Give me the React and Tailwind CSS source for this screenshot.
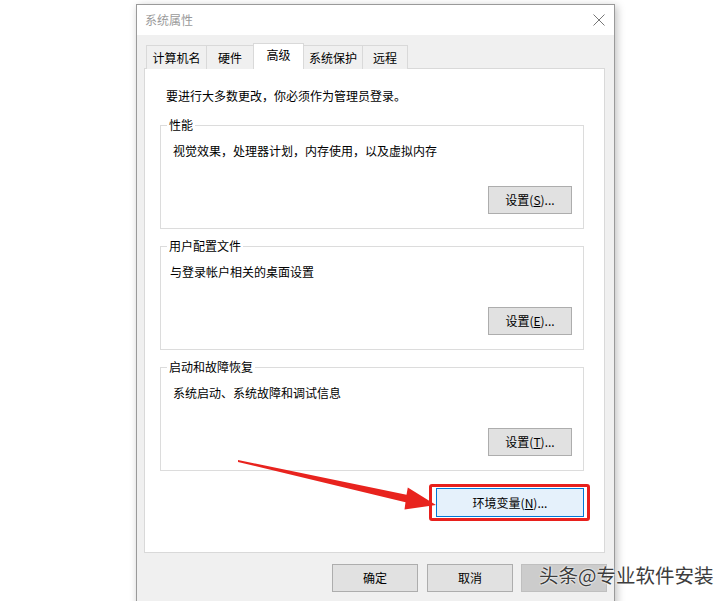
import React from "react";

const tabs = [
  { label: "计算机名", w: "w-[61px]" },
  { label: "硬件", w: "w-[48px]" },
  { label: "高级", w: "w-[51px]", active: true },
  { label: "系统保护", w: "w-[60px]" },
  { label: "远程", w: "w-[46px]" },
];

const groups = [
  { title: "性能", text: "视觉效果，处理器计划，内存使用，以及虚拟内存", key: "S", pl: "pl-[12px]" },
  { title: "用户配置文件", text: "与登录帐户相关的桌面设置", key: "E", pl: "pl-[9px]" },
  { title: "启动和故障恢复", text: "系统启动、系统故障和调试信息", key: "T", pl: "pl-[12px]" },
];

const WinButton = ({ children, className = "" }) => (
  <button className={`h-[28px] bg-[#e1e1e1] border border-[#adadad] text-black text-[12px] leading-none flex items-center justify-center ${className}`}>
    {children}
  </button>
);

const Group = ({ title, text, hotkey, pl }) => (
  <div className="relative w-[424px] h-[104px] border border-[#dcdcdc] ml-[15px]">
    <span className="absolute left-[6px] -top-[9px] bg-white px-[2px] leading-[16px]">{title}</span>
    <div className={`pt-[17px] ${pl} leading-[16px]`}>{text}</div>
    <div className="flex justify-end mt-[27px] pr-[11px]">
      <WinButton className="w-[84px] h-[27px]">
        设置(<u>{hotkey}</u>)...
      </WinButton>
    </div>
  </div>
);

export default function App() {
  return (
    <div className="relative h-[601px] overflow-hidden bg-white text-[12px] text-black font-['Noto_Sans_CJK_SC','Noto_Sans',sans-serif]">
      <div className="ml-[136px] pt-[4px]">
        <div className="w-[479px] h-[610px] border border-[#9a9a9a] bg-[#f0f0f0] shadow-[2px_2px_8px_rgba(0,0,0,0.25)] flex flex-col">
          {/* title bar */}
          <div className="h-[30px] bg-white flex items-center justify-between pl-[8px] pr-[8px]">
            <span className="text-[#9a9a9a] text-[12px]">系统属性</span>
            <svg width="12" height="12" viewBox="0 0 12 12" className="mr-[1px]">
              <path d="M0.5 0.5 L11.5 11.5 M11.5 0.5 L0.5 11.5" stroke="#777" strokeWidth="1" fill="none" />
            </svg>
          </div>

          {/* body */}
          <div className="pl-[7px] pt-[8px]">
            <div className="relative z-10 flex items-end h-[26px] pl-[2px]">
              {tabs.map((t, i) => (
                <div
                  key={t.label}
                  className={`${t.w} ${i > 0 ? "-ml-px" : ""} flex items-center justify-center border border-[#d9d9d9] ${
                    t.active
                      ? "h-[26px] bg-white border-b-0 pb-[3px] relative z-10"
                      : "h-[24px] bg-[#f0f0f0] border-b-0 pt-[1px]"
                  }`}
                >
                  {t.label}
                </div>
              ))}
            </div>

            <div className="relative w-[461px] h-[485px] -mt-px bg-white border border-[#d9d9d9]">
              <div className="pt-[19px] pl-[21px] leading-[16px]">要进行大多数更改，你必须作为管理员登录。</div>

              <div className="mt-[21px] flex flex-col gap-[17px]">
                {groups.map((g) => (
                  <Group key={g.title} title={g.title} text={g.text} hotkey={g.key} pl={g.pl} />
                ))}
              </div>

              <div className="flex justify-end mt-[17px] pr-[20px]">
                <div className="relative">
                  <button className="w-[148px] h-[29px] bg-[#e5f1fb] border border-[#0078d7] text-[12px] flex items-center justify-center">
                    环境变量(<u>N</u>)...
                  </button>
                  <div className="absolute -left-[7px] -right-[6px] -top-[4px] -bottom-[4px] border-[3px] border-[#e8201c] rounded-[3px]" />
                </div>
              </div>
            </div>

            <div className="flex justify-end gap-[8px] pr-[7px] mt-[11px]">
              <WinButton className="w-[86px] mr-[1px]">确定</WinButton>
              <WinButton className="w-[86px]">取消</WinButton>
              <div className="w-[86px] h-[28px] bg-[#cccccc] border border-[#bfbfbf]" />
            </div>
          </div>
        </div>
      </div>

      {/* red arrow */}
      <svg className="absolute left-0 top-0 pointer-events-none" width="728" height="601">
        <polygon
          points="238,460 406.5,494.8 407.8,487.5 436,505 404.5,509.5 405.5,502.2 238,462"
          fill="#e8231e"
        />
      </svg>

      {/* watermark */}
      <div className="absolute left-[539px] top-[562px] text-[19.5px] leading-[26px] text-[#3d3d3d] [text-shadow:0_0_2px_#fff,0_0_2px_#fff] whitespace-nowrap">
        头条@专业软件安装
      </div>
    </div>
  );
}
